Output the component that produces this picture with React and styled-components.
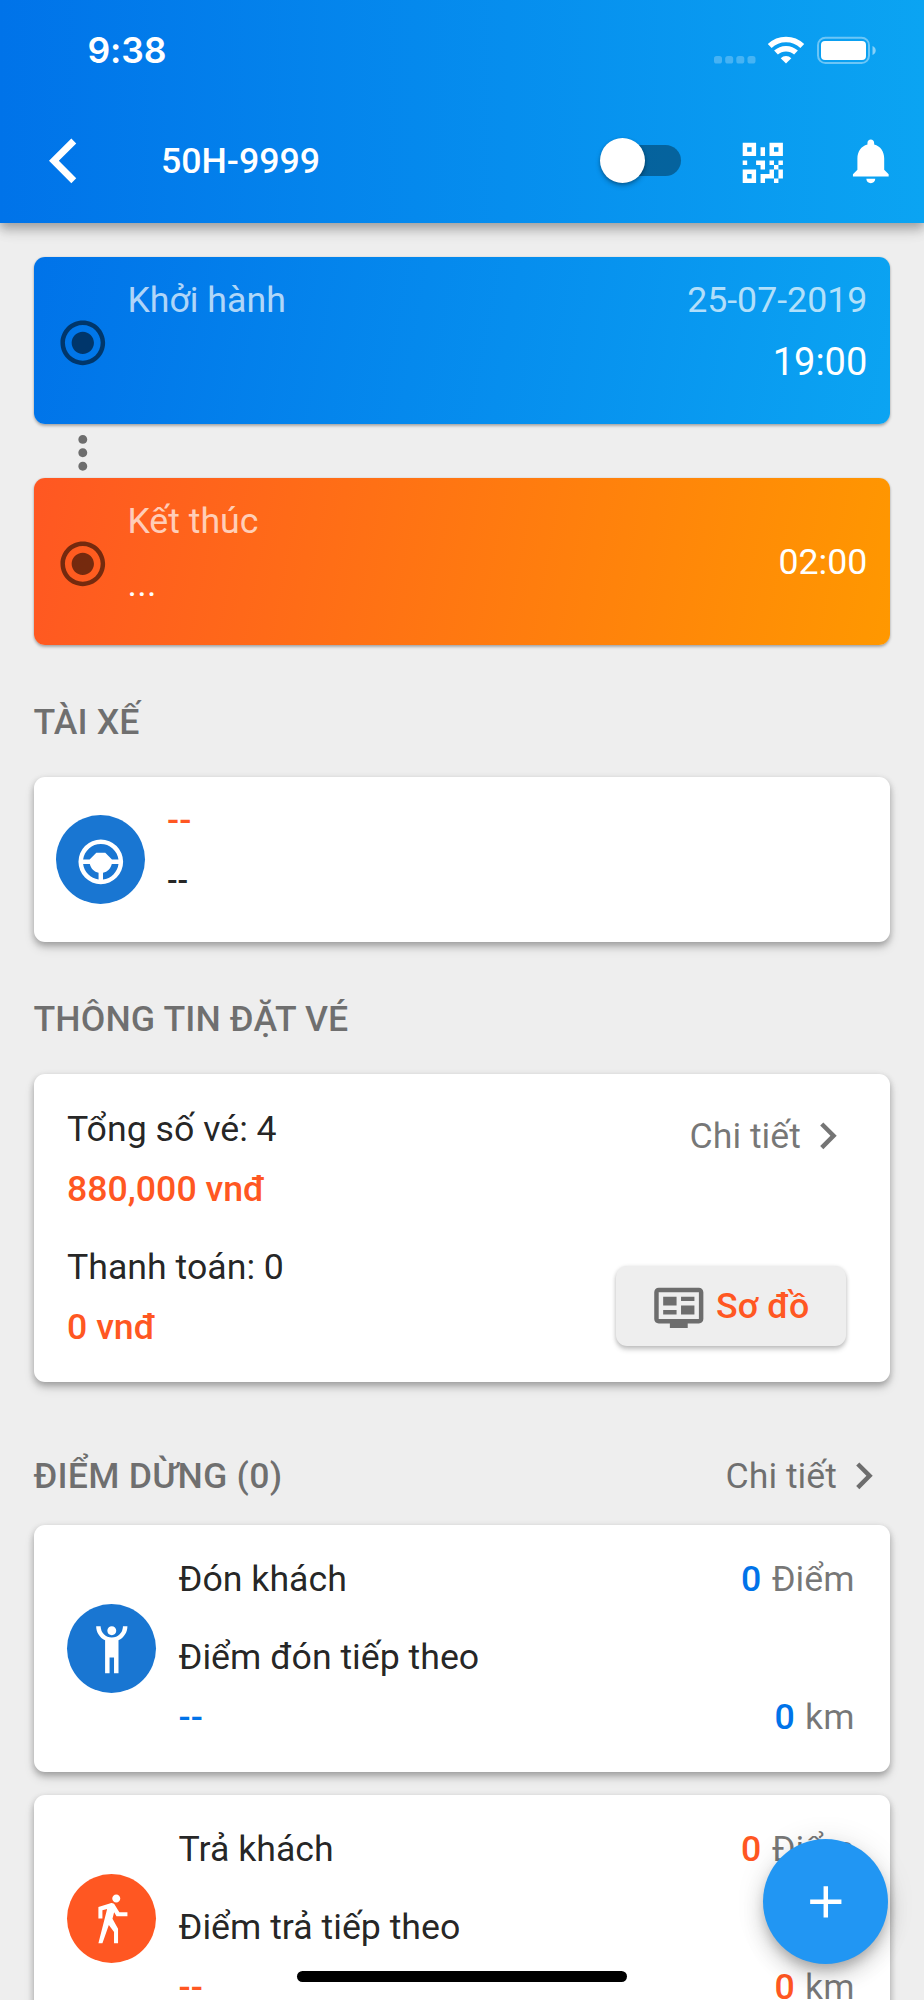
import React from "react";
import styled, { createGlobalStyle } from "styled-components";

const COLORS = {
  blue: "#0073e9",
  blueDark: "#1976d2",
  blueFab: "#2196f3",
  orange: "#ff5722",
  grey: "#eeeeee",
  text: "rgba(0, 0, 0, 0.87)",
  textMuted: "rgba(0, 0, 0, 0.54)"
};

const PATHS = {
  back: "M12.2 4.2L10 2 0 12l10 10 2.2-2.2L4.4 12z",
  chevron: "M10 6L8.59 7.41 13.17 12l-4.58 4.59L10 18l6-6z",
  qrcode:
    "M3,11H5V13H3V11M11,5H13V9H11V5M9,11H13V15H11V13H9V11M15,11H17V13H19V11H21V13H19V15H21V19H19V21H17V19H13V21H11V17H15V15H17V13H15V11M19,19V15H17V19H19M15,3H21V9H15V3M17,5V7H19V5H17M3,3H9V9H3V3M5,5V7H7V5H5M3,15H9V21H3V15M5,17V19H7V17H5Z",
  bell:
    "M12 22c1.1 0 2-.9 2-2h-4c0 1.1.9 2 2 2zm6-6v-5c0-3.07-1.63-5.64-4.5-6.32V4c0-.83-.67-1.5-1.5-1.5s-1.5.67-1.5 1.5v.68C7.64 5.36 6 7.92 6 11v5l-2 2v1h16v-1l-2-2z",
  radio:
    "M12 7c-2.76 0-5 2.24-5 5s2.24 5 5 5 5-2.24 5-5-2.24-5-5-5zm0-5C6.48 2 2 6.48 2 12s4.48 10 10 10 10-4.48 10-10S17.52 2 12 2zm0 18c-4.42 0-8-3.58-8-8s3.58-8 8-8 8 3.58 8 8-3.58 8-8 8z",
  dots:
    "M12 8c1.1 0 2-.9 2-2s-.9-2-2-2-2 .9-2 2 .9 2 2 2zm0 2c-1.1 0-2 .9-2 2s.9 2 2 2 2-.9 2-2-.9-2-2-2zm0 6c-1.1 0-2 .9-2 2s.9 2 2 2 2-.9 2-2-.9-2-2-2z",
  steering:
    "M13,19.92C14.8,19.7 16.35,18.95 17.65,17.65C18.95,16.35 19.7,14.8 19.92,13H16.92C16.7,14 16.24,14.84 15.54,15.54C14.84,16.24 14,16.7 13,16.92V19.92M10,8H14L17,11H19.92C19.67,9.05 18.79,7.38 17.27,6C15.76,4.66 14,4 12,4C10,4 8.24,4.66 6.73,6C5.21,7.38 4.33,9.05 4.08,11H7L10,8M11,19.92V16.92C10,16.7 9.16,16.24 8.46,15.54C7.76,14.84 7.3,14 7.08,13H4.08C4.3,14.77 5.05,16.3 6.35,17.6C7.65,18.9 9.2,19.67 11,19.92M12,2A10,10 0 0,1 22,12A10,10 0 0,1 12,22A10,10 0 0,1 2,12A10,10 0 0,1 12,2Z",
  board:
    "M21 3H3c-1.1 0-2 .9-2 2v12c0 1.1.9 2 2 2h5v2h8v-2h5c1.1 0 2-.9 2-2V5c0-1.1-.9-2-2-2zm0 14H3V5h18v12zM5 7h6v4H5zM5 13h6v2H5zM13 7h6v2h-6zM13 11h6v4h-6z",
  handsUp:
    "M5,1C5,3.7 6.56,6.16 9,7.32V22H11V15H13V22H15V7.31C17.44,6.16 19,3.7 19,1H17A5,5 0 0,1 12,6A5,5 0 0,1 7,1M12,1C10.89,1 10,1.89 10,3C10,4.11 10.89,5 12,5C13.11,5 14,4.11 14,3C14,1.89 13.11,1 12,1Z",
  walk:
    "M14.12,10H19V8.2H15.38L13.38,4.87C13.08,4.37 12.54,4.03 11.92,4.03C11.74,4.03 11.58,4.06 11.42,4.11L6,5.8V11H7.8V7.33L9.91,6.67L6,22H7.8L10.67,13.89L13,17V22H14.8V15.59L12.31,11.05L13.04,8.18M14,3.8C15,3.8 15.8,3 15.8,2C15.8,1 15,0.2 14,0.2C13,0.2 12.2,1 12.2,2C12.2,3 13,3.8 14,3.8Z",
  add: "M19 13h-6v6h-2v-6H5v-2h6V5h2v6h6v2z"
};

function Icon({ name, ...rest }) {
  return (
    <IconSVG viewBox="0 0 24 24" aria-hidden="true" {...rest}>
      <path d={PATHS[name]} fillRule="evenodd" />
    </IconSVG>
  );
}

function StatusBar() {
  return (
    <Status>
      <Clock>9:38</Clock>
      <StatusIcons width="164" height="30" viewBox="0 0 164 30">
        <g fill="#fff" fillOpacity="0.25">
          <rect x="0" y="20" width="8" height="7.6" rx="2.6" />
          <rect x="11.2" y="20" width="8" height="7.6" rx="2.6" />
          <rect x="22.3" y="20" width="8" height="7.6" rx="2.6" />
          <rect x="33.5" y="20" width="8" height="7.6" rx="2.6" />
        </g>
        <g fill="none" stroke="#fff" strokeWidth="5.5">
          <path d="M55.7 10a23.5 23.5 0 0 1 32.6 0" />
          <path d="M62 16.6a14.6 14.6 0 0 1 20 0" />
        </g>
        <path d="M72 27.4l-5.3-5.2a7.6 7.6 0 0 1 10.6 0z" fill="#fff" />
        <rect
          x="104"
          y="1.7"
          width="51"
          height="25.4"
          rx="7.5"
          fill="none"
          stroke="#fff"
          strokeOpacity="0.4"
          strokeWidth="2"
        />
        <rect x="107" y="5" width="45" height="19" rx="4" fill="#fff" />
        <path d="M158.5 10v9c2-.9 3.2-2.5 3.2-4.5s-1.2-3.6-3.2-4.5z" fill="#fff" fillOpacity="0.5" />
      </StatusIcons>
    </Status>
  );
}

function StopCard({ icon, color, iconColor, title, next }) {
  return (
    <Card>
      <StopBody>
        <Avatar bg={iconColor}>
          <AvatarIcon name={icon} />
        </Avatar>
        <StopInfo>
          <Row>
            <Text>{title}</Text>
            <Measure>
              <Count color={color}>0</Count> Điểm
            </Measure>
          </Row>
          <NextPoint>{next}</NextPoint>
          <Row>
            <Strong color={color}>--</Strong>
            <Measure>
              <Count color={color}>0</Count> km
            </Measure>
          </Row>
        </StopInfo>
      </StopBody>
    </Card>
  );
}

export default function App() {
  return (
    <Screen>
      <GlobalStyle />
      <Header>
        <StatusBar />
        <Toolbar>
          <Icon name="back" />
          <Title>50H-9999</Title>
          <Toggle role="switch" aria-checked="false">
            <Thumb />
          </Toggle>
          <QrIcon name="qrcode" />
          <BellIcon name="bell" />
        </Toolbar>
      </Header>

      <Content>
        <TripCard from={COLORS.blue} to="#0ba4f2">
          <TripIcon name="radio" />
          <TripText>
            <TripLabel>Khởi hành</TripLabel>
          </TripText>
          <TripTime>
            <TripLabel>25-07-2019</TripLabel>
            <Time large>19:00</Time>
          </TripTime>
        </TripCard>
        <Connector>
          <Icon name="dots" />
        </Connector>
        <TripCard from={COLORS.orange} to="#ff9800">
          <TripIcon name="radio" />
          <TripText>
            <TripLabel>Kết thúc</TripLabel>
            <Place>...</Place>
          </TripText>
          <TripTime middle>
            <Time>02:00</Time>
          </TripTime>
        </TripCard>

        <SectionTitle>TÀI XẾ</SectionTitle>
        <Card>
          <DriverBody>
            <Avatar bg={COLORS.blueDark}>
              <AvatarIcon name="steering" />
            </Avatar>
            <DriverInfo>
              <Strong color={COLORS.orange}>--</Strong>
              <Phone>--</Phone>
            </DriverInfo>
          </DriverBody>
        </Card>

        <SectionTitle>THÔNG TIN ĐẶT VÉ</SectionTitle>
        <Card>
          <TicketBody>
            <TicketInfo>
              <Text>Tổng số vé: 4</Text>
              <Strong color={COLORS.orange}>880,000 vnđ</Strong>
              <Payment>Thanh toán: 0</Payment>
              <Strong color={COLORS.orange}>0 vnđ</Strong>
            </TicketInfo>
            <TicketActions>
              <CardDetail>
                Chi tiết
                <Icon name="chevron" />
              </CardDetail>
              <MapButton>
                <BoardIcon name="board" />
                Sơ đồ
              </MapButton>
            </TicketActions>
          </TicketBody>
        </Card>

        <StopHeader>
          <StopTitle>ĐIỂM DỪNG (0)</StopTitle>
          <Detail>
            Chi tiết
            <Icon name="chevron" />
          </Detail>
        </StopHeader>
        <StopList>
          <StopCard
            icon="handsUp"
            color={COLORS.blue}
            iconColor={COLORS.blueDark}
            title="Đón khách"
            next="Điểm đón tiếp theo"
          />
          <StopCard
            icon="walk"
            color={COLORS.orange}
            iconColor={COLORS.orange}
            title="Trả khách"
            next="Điểm trả tiếp theo"
          />
        </StopList>
      </Content>

      <Fab aria-label="Thêm">
        <Icon name="add" />
      </Fab>
      <HomeIndicator />
    </Screen>
  );
}

const GlobalStyle = createGlobalStyle`
  body {
    margin: 0;
    background: ${COLORS.grey};
  }

  * {
    box-sizing: border-box;
  }
`;

const Screen = styled.div`
  position: relative;
  width: 924px;
  height: 2000px;
  overflow: hidden;
  background: ${COLORS.grey};
  color: ${COLORS.text};
  font-family: Roboto, sans-serif;
  font-size: 35.7px;
  line-height: 42px;
`;

const IconSVG = styled.svg`
  display: block;
  flex: none;
  width: 53.6px;
  height: 53.6px;
  fill: currentColor;
`;

const Header = styled.header`
  height: 223px;
  color: white;
  background: linear-gradient(90deg, ${COLORS.blue}, #0ba4f2);
  box-shadow: 0 4px 9px rgba(0, 0, 0, 0.2), 0 9px 11px rgba(0, 0, 0, 0.12),
    0 2px 22px rgba(0, 0, 0, 0.08);
`;

const Status = styled.div`
  display: flex;
  justify-content: space-between;
  height: 98px;
  padding: 30px 46px 0 87.5px;
`;

const Clock = styled.span`
  font-family: Inter, sans-serif;
  font-size: 35.5px;
  font-weight: 600;
  letter-spacing: -0.1px;
`;

const StatusIcons = styled.svg`
  margin-top: 6px;
`;

const Toolbar = styled.div`
  display: flex;
  align-items: center;
  height: 125px;
  padding: 0 26px 0 49.3px;
`;

const Title = styled.h1`
  flex: 1;
  margin: 0 0 0 58px;
  font-size: 35.7px;
  font-weight: 500;
`;

const Toggle = styled.div`
  display: flex;
  align-items: center;
  width: 74px;
  height: 31px;
  margin-right: 55.5px;
  border-radius: 16px;
  background: rgba(0, 0, 0, 0.34);
`;

const Thumb = styled.span`
  flex: none;
  width: 45px;
  height: 45px;
  margin-left: -7px;
  border-radius: 50%;
  background: white;
  box-shadow: 0 3px 5px rgba(0, 0, 0, 0.25), 0 1px 3px rgba(0, 0, 0, 0.2);
`;

const QrIcon = styled(Icon)`
  margin-top: 4px;
`;

const BellIcon = styled(Icon)`
  margin-left: 54.5px;
`;

const Content = styled.main`
  padding: 34px 34px 0 33.5px;
`;

const TripCard = styled.section`
  display: flex;
  height: 167px;
  padding: 0 22.7px 0 22.3px;
  border-radius: 11px;
  color: white;
  background: linear-gradient(101deg, ${props => props.from}, ${props => props.to});
  box-shadow: 0 2px 3px rgba(0, 0, 0, 0.28), 0 0 2px rgba(0, 0, 0, 0.12);
`;

const TripIcon = styled(Icon)`
  align-self: center;
  margin-top: 5px;
  color: ${COLORS.textMuted};
`;

const TripText = styled.div`
  display: flex;
  flex: 1;
  flex-direction: column;
  gap: 21px;
  padding: 22px 0 0 18px;
`;

const TripTime = styled.div`
  display: flex;
  flex-direction: column;
  align-items: flex-end;
  justify-content: ${props => (props.middle ? "center" : "flex-start")};
  gap: 20px;
  padding-top: ${props => (props.middle ? "0" : "22px")};
`;

const TripLabel = styled.span`
  color: rgba(255, 255, 255, 0.7);
`;

const Place = styled.span`
  letter-spacing: 0.4px;
`;

const Time = styled.span`
  font-size: ${props => (props.large ? "38px" : "35.7px")};
`;

const Connector = styled.div`
  height: 54px;
  padding: 2px 0 0 22.3px;
  color: ${COLORS.textMuted};
`;

const SectionTitle = styled.h2`
  margin: 56px 0 34px;
  color: ${COLORS.textMuted};
  font-size: 35.7px;
  font-weight: 500;
  letter-spacing: 0.1px;
`;

const Card = styled.section`
  border-radius: 11px;
  background: white;
  box-shadow: 0 4px 6px rgba(0, 0, 0, 0.2), 0 6px 11px rgba(0, 0, 0, 0.12),
    0 1px 7px rgba(0, 0, 0, 0.08);
`;

const Avatar = styled.div`
  display: flex;
  flex: none;
  align-items: center;
  justify-content: center;
  width: 89px;
  height: 89px;
  border-radius: 50%;
  color: white;
  background: ${props => props.bg};
`;

const AvatarIcon = styled(Icon)`
  margin-top: 4px;
`;

const Text = styled.span``;

const Strong = styled.span`
  color: ${props => props.color};
  font-weight: 500;
`;

const Count = styled(Strong)`
  margin-right: 1.5px;
`;

const DriverBody = styled.div`
  display: flex;
  align-items: center;
  height: 165px;
  padding: 0 22.5px;
`;

const DriverInfo = styled.div`
  display: flex;
  flex-direction: column;
  gap: 19px;
  margin-left: 22px;
  padding-bottom: 18px;
`;

const Phone = styled.span`
  font-size: 31.2px;
  font-weight: 500;
`;

const TicketBody = styled.div`
  display: flex;
  justify-content: space-between;
  height: 307.7px;
  padding: 34px 44.5px 0 33.5px;
`;

const TicketInfo = styled.div`
  display: flex;
  flex-direction: column;
  gap: 18px;
`;

const Payment = styled.span`
  margin-top: 18px;
`;

const TicketActions = styled.div`
  display: flex;
  flex-direction: column;
  align-items: flex-end;
  justify-content: space-between;
  padding-bottom: 35.5px;
`;

const Detail = styled.a`
  display: flex;
  align-items: center;
  height: 58px;
  color: ${COLORS.textMuted};
`;

const CardDetail = styled(Detail)`
  height: 56px;
  margin-right: -9px;
`;

const MapButton = styled.button`
  display: flex;
  align-items: center;
  gap: 11px;
  width: 230px;
  height: 80px;
  padding: 0 36px;
  border: 0;
  border-radius: 11px;
  color: ${COLORS.orange};
  background: ${COLORS.grey};
  box-shadow: 0 4px 5px rgba(0, 0, 0, 0.16), 0 1px 4px rgba(0, 0, 0, 0.16);
  font: inherit;
  font-weight: 500;
  white-space: nowrap;
`;

const BoardIcon = styled(Icon)`
  margin-top: 3px;
  color: ${COLORS.textMuted};
`;

const StopHeader = styled.div`
  display: flex;
  align-items: center;
  justify-content: space-between;
  margin: 65px -0.5px 20px 0;
`;

const StopTitle = styled.h2`
  margin: 0;
  color: ${COLORS.textMuted};
  font-size: 35.7px;
  font-weight: 500;
  letter-spacing: 0.2px;
`;

const StopList = styled.div`
  display: flex;
  flex-direction: column;
  gap: 22.5px;
`;

const StopBody = styled.div`
  display: flex;
  align-items: center;
  height: 247.7px;
  padding: 0 35.5px 0 33.5px;
`;

const StopInfo = styled.div`
  display: flex;
  flex: 1;
  flex-direction: column;
  margin-left: 22.5px;
  padding-bottom: 2px;
`;

const Row = styled.div`
  display: flex;
  justify-content: space-between;
`;

const NextPoint = styled.span`
  margin: 36px 0 18px;
`;

const Measure = styled.span`
  color: ${COLORS.textMuted};
`;

const Fab = styled.button`
  position: absolute;
  right: 36px;
  bottom: 36px;
  display: flex;
  align-items: center;
  justify-content: center;
  width: 125px;
  height: 125px;
  padding: 0;
  border: 0;
  border-radius: 50%;
  color: white;
  background: ${COLORS.blueFab};
  box-shadow: 0 7px 11px -2px rgba(0, 0, 0, 0.2), 0 13px 22px rgba(0, 0, 0, 0.14),
    0 2px 30px rgba(0, 0, 0, 0.1);
`;

const HomeIndicator = styled.div`
  position: absolute;
  bottom: 18px;
  left: 297px;
  width: 330px;
  height: 11px;
  border-radius: 6px;
  background: black;
`;
